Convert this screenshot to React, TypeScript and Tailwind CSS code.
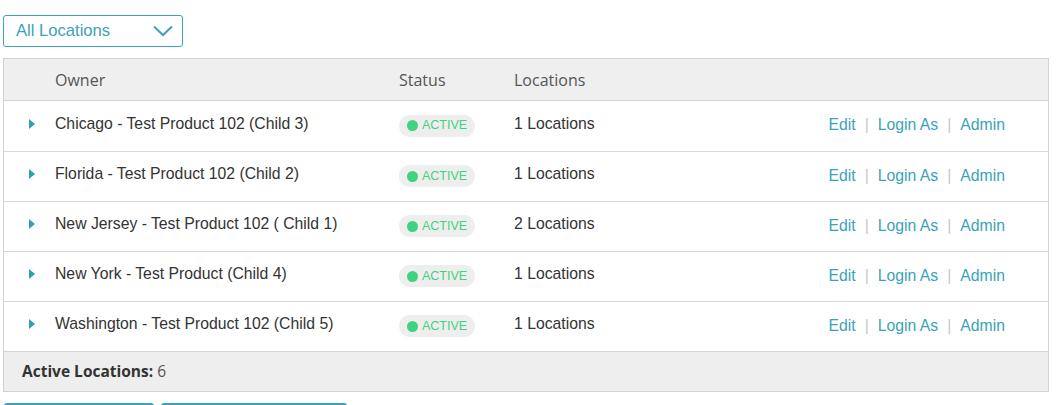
type Row = { owner: string; locations: number };

const ROWS: Row[] = [
  { owner: "Chicago - Test Product 102 (Child 3)", locations: 1 },
  { owner: "Florida - Test Product 102 (Child 2)", locations: 1 },
  { owner: "New Jersey - Test Product 102 ( Child 1)", locations: 2 },
  { owner: "New York - Test Product (Child 4)", locations: 1 },
  { owner: "Washington - Test Product 102 (Child 5)", locations: 1 },
];

function StatusBadge() {
  return (
    <span className="inline-flex items-center gap-[4px] h-[22px] pl-[8px] pr-[8px] rounded-full bg-[#eeeeee]">
      <span className="w-[11px] h-[11px] rounded-full bg-[#3fd37f]" />
      <span className="text-[12.5px] text-[#3fd37f] leading-none">ACTIVE</span>
    </span>
  );
}

function Actions() {
  return (
    <div className="flex items-center text-[15.75px] text-[#3aa3b8]">
      <a className="cursor-pointer">Edit</a>
      <span className="text-[#c8c8c8] px-[9px]">|</span>
      <a className="cursor-pointer">Login As</a>
      <span className="text-[#c8c8c8] px-[9px]">|</span>
      <a className="cursor-pointer">Admin</a>
    </div>
  );
}

export default function App() {
  return (
    <div className="bg-white w-[1062px] h-[405px] overflow-hidden font-['Liberation_Sans',Arial,sans-serif] text-[#333]">
      <div className="pt-[15px] pl-[3px]">
        {/* Location filter */}
        <button className="flex items-center justify-between w-[180px] h-[32px] pl-[12px] pr-[8px] border border-[#3aa3b8] rounded-[3px] bg-white text-[16.6px] text-[#3aa3b8]">
          <span>All Locations</span>
          <svg width="20" height="12" viewBox="0 0 20 12" className="mr-[1px]">
            <path d="M1 1.5 L10 10 L19 1.5" fill="none" stroke="#3aa3b8" strokeWidth="2" />
          </svg>
        </button>

        {/* Table */}
        <div className="mt-[11px] w-[1046px] border border-[#d3d3d3]">
          <div className="flex items-center h-[42px] bg-[#efefef] border-b border-[#d3d3d3] font-['Open_Sans',sans-serif] text-[16px] text-[#555]">
            <div className="w-[51px]" />
            <div className="w-[344px]">Owner</div>
            <div className="w-[115px]">Status</div>
            <div>Locations</div>
          </div>

          {ROWS.map((row, i) => (
            <div
              key={row.owner}
              className={`flex items-center h-[50px] ${i > 0 ? "border-t border-[#d8d8d8]" : ""}`}
            >
              <div className="w-[51px] flex justify-center pl-[4px] pb-[5px]">
                <svg width="6" height="10" viewBox="0 0 6 10">
                  <path d="M0 0 L6 5 L0 10 Z" fill="#2fa0b4" />
                </svg>
              </div>
              <div className="w-[344px] text-[15.75px] pb-[5px]">{row.owner}</div>
              <div className="w-[115px]">
                <StatusBadge />
              </div>
              <div className="flex-1 text-[15.75px] pb-[5px]">{row.locations} Locations</div>
              <div className="pr-[43px] pb-[2px]">
                <Actions />
              </div>
            </div>
          ))}

          <div className="flex items-center h-[40px] bg-[#eeeeee] border-t border-[#d3d3d3] pl-[18px] font-['Open_Sans',sans-serif] text-[15.5px] text-[#333]">
            <span className="font-bold">Active Locations:</span>
            <span className="ml-[4px] text-[#555]">6</span>
          </div>
        </div>

        {/* Bottom buttons */}
        <div className="flex gap-[7px] mt-[11px] pl-[1px]">
          <button className="w-[150px] h-[32px] border-2 border-[#3aa3b8] rounded-[3px]" />
          <button className="w-[186px] h-[32px] border-2 border-[#3aa3b8] rounded-[3px]" />
        </div>
      </div>
    </div>
  );
}
